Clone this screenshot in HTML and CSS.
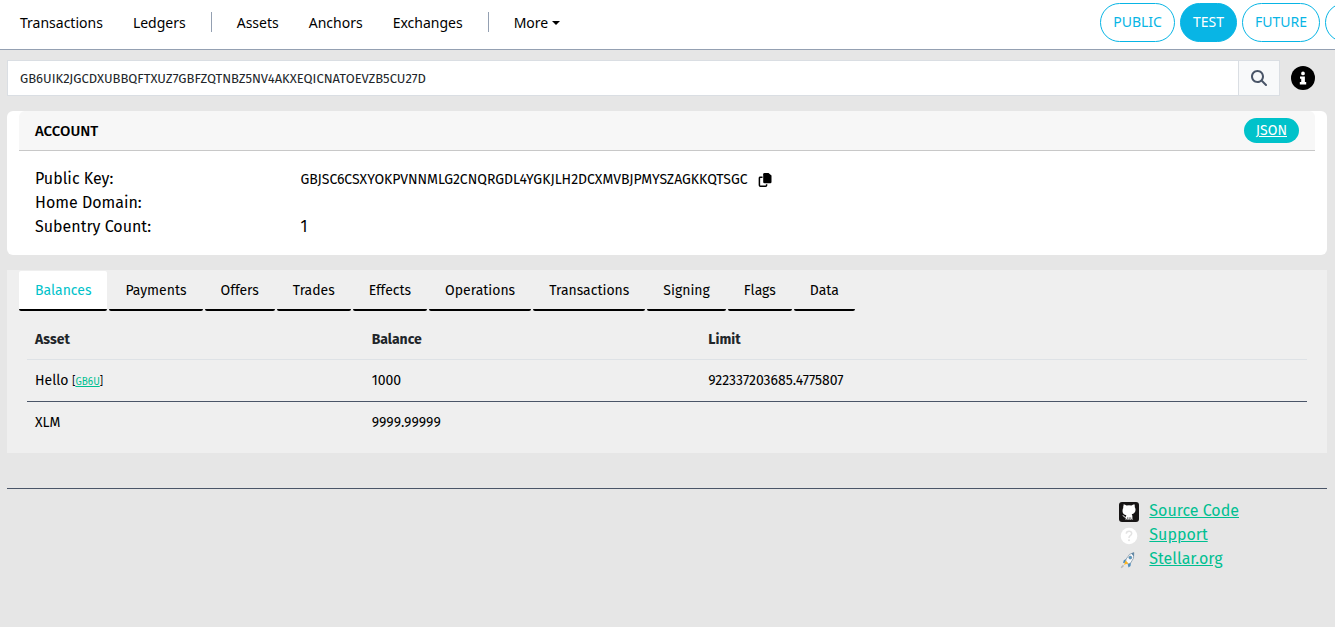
FILE: index.html
```html
<!DOCTYPE html>
<html lang="en">
<head>
<meta charset="utf-8">
<meta name="viewport" content="width=device-width, initial-scale=1">
<title>Account</title>
<link rel="stylesheet" href="styles.css">
</head>
<body>
<header class="topbar">
  <nav class="menu">
    <a href="#transactions">Transactions</a>
    <a href="#ledgers">Ledgers</a>
    <span class="divider"></span>
    <a href="#assets">Assets</a>
    <a href="#anchors">Anchors</a>
    <a href="#exchanges">Exchanges</a>
    <span class="divider"></span>
    <button class="more" type="button">More<span class="caret"></span></button>
  </nav>
  <div class="networks">
    <button class="pill" type="button">PUBLIC</button>
    <button class="pill pill-active" type="button">TEST</button>
    <button class="pill" type="button">FUTURE</button>
    <button class="pill pill-last" type="button"></button>
  </div>
</header>

<main class="page">
  <form class="search">
    <input class="search-input" type="text" aria-label="Search" value="GB6UIK2JGCDXUBBQFTXUZ7GBFZQTNBZ5NV4AKXEQICNATOEVZB5CU27D">
    <button class="search-button" type="button" aria-label="Search">
      <svg width="16" height="16" viewBox="0 0 512 512" fill="#4a5568"><path d="M416 208c0 45.900-14.900 88.300-40 122.700L502.600 457.400c12.500 12.500 12.500 32.800 0 45.300s-32.800 12.500-45.300 0L330.700 376c-34.400 25.200-76.800 40-122.700 40C93.100 416 0 322.900 0 208S93.100 0 208 0S416 93.100 416 208zM208 352a144 144 0 1 0 0-288 144 144 0 1 0 0 288z"/></svg>
    </button>
    <button class="info" type="button" aria-label="Information">
      <svg width="24" height="24" viewBox="0 0 512 512"><circle cx="256" cy="256" r="256"/><path fill="#fff" d="M256 118a40 40 0 1 1 0 80 40 40 0 1 1 0-80zM192 222h104v118h28v52H188v-52h30v-68h-26z"/></svg>
    </button>
  </form>

  <section class="card">
    <div class="card-head">
      <h1>ACCOUNT</h1>
      <a class="json" href="#json">JSON</a>
    </div>
    <dl class="details">
      <dt>Public Key:</dt>
      <dd class="key">GBJSC6CSXYOKPVNNMLG2CNQRGDL4YGKJLH2DCXMVBJPMYSZAGKKQTSGC
        <button class="copy" type="button" aria-label="Copy">
          <svg width="14" height="14" viewBox="0 0 14 14"><path d="M6.500 0h4L13.500 2.500V9q0 1.200-1.200 1.200H6.500Q5.200 10.200 5.200 9V1.200Q5.200 0 6.500 0z"/><path d="M4.500 4.300H2.200Q1.400 4.300 1.400 5v7.200q0 1 1 1h5.200q1 0 1-1V11.300" fill="none" stroke="#000" stroke-width="1.500"/></svg>
        </button>
      </dd>
      <dt>Home Domain:</dt>
      <dd></dd>
      <dt>Subentry Count:</dt>
      <dd>1</dd>
    </dl>
  </section>

  <section class="panel">
    <nav class="tabs">
      <a class="tab tab-active" href="#balances">Balances</a>
      <a class="tab" href="#payments">Payments</a>
      <a class="tab" href="#offers">Offers</a>
      <a class="tab" href="#trades">Trades</a>
      <a class="tab" href="#effects">Effects</a>
      <a class="tab" href="#operations">Operations</a>
      <a class="tab" href="#account-transactions">Transactions</a>
      <a class="tab" href="#signing">Signing</a>
      <a class="tab" href="#flags">Flags</a>
      <a class="tab" href="#data">Data</a>
    </nav>
    <div class="table-wrap">
      <table class="balances">
        <thead>
          <tr><th class="col-asset">Asset</th><th class="col-balance">Balance</th><th>Limit</th></tr>
        </thead>
        <tbody>
          <tr><td>Hello <small>[<a href="#issuer">GB6U</a>]</small></td><td>1000</td><td>922337203685.4775807</td></tr>
          <tr><td>XLM</td><td>9999.99999</td><td></td></tr>
        </tbody>
      </table>
    </div>
  </section>

  <footer class="footer">
    <ul class="links">
      <li>
        <svg width="20" height="20" viewBox="0 0 20 20"><rect width="20" height="20" rx="3" fill="#171515"/><path fill="#fff" d="M4.600 2.200Q6.200 2.500 7.500 3.400q2.500-.5 5 0 1.300-.9 2.900-1.200.6 1.500.3 2.900 1 1.200.8 3.200-.3 3.200-3.800 4 .7.800.7 2v2.500l.8.700h-1.700l-.4-1v-1.200h-.5v1.700l.4.800h-1.400l-.2-.6v-1.900h-.6v1.900l-.3.600H8.200l.3-.8v-1.700H8v1.300l-.4.900H6.100l.6-.8v-1q-1.600.1-2.200-1.100-.4-.8-1.200-1.200 1.300-.3 2.100.9.600.8 1.400.5.100-.9.600-1.500-3.700-.6-3.900-4-.1-2 .8-3.200-.3-1.400.3-2.900z"/></svg>
        <a href="#source">Source Code</a>
      </li>
      <li>
        <svg width="20" height="20" viewBox="0 0 20 20"><circle cx="10" cy="10" r="8.300" fill="#fff"/><path d="M7.300 7.800Q7.400 5.300 10 5.300t2.700 2.200q0 1.300-1.500 2.200Q10 10.500 10 12" fill="none" stroke="#e3e3e3" stroke-width="1.500"/><circle cx="10" cy="14.300" r="1" fill="#e3e3e3"/></svg>
        <a href="#support">Support</a>
      </li>
      <li>
        <svg width="20" height="20" viewBox="0 0 20 20"><path d="M8 8.500 4.800 10.300 4 13l4-.5zM12 12l-.5 4-2 1.500-.8-3.500z" fill="#4c8dbe"/><path d="M14.800 2.500Q10 3 7.200 9L6.600 11.500l2.700 2.300 2.300-.7Q15.800 8.500 14.800 2.500z" fill="#f8f9fb" stroke="#8499aa" stroke-width=".8"/><path d="M14.800 2.500 12.300 3.500l2.500 3z" fill="#567f9f"/><circle cx="11.300" cy="7.600" r="1.500" fill="#4d9ac8" stroke="#64788a" stroke-width=".5"/><path d="M6.800 10.500 5 14.800 9.300 13.600z" fill="#ffb51b"/><path d="m2.200 17.700 2.300-2.300" stroke="#b8b8b8" stroke-width="1.500"/></svg>
        <a href="#stellar">Stellar.org</a>
      </li>
    </ul>
  </footer>
</main>
</body>
</html>
```

FILE: styles.css
```css
* { box-sizing: border-box; }

body {
  margin: 0;
  background: #e6e6e6;
  color: #000;
  font: 16px/24px "Fira Sans", "Noto Sans", sans-serif;
}

button { font: inherit; cursor: pointer; }

.topbar {
  display: flex;
  justify-content: space-between;
  height: 50px;
  overflow: hidden;
  background: #fff;
  border-bottom: 1px solid #94a0b2;
  font: 14px/20px "Noto Sans", sans-serif;
}

.menu {
  display: flex;
  align-items: center;
  gap: 30px;
  height: 44px;
  padding-left: 20px;
}
.menu a { color: #000; text-decoration: none; line-height: 22px; }
.divider {
  width: 1px;
  height: 20px;
  margin: 0 -5px;
  background: #94a0b2;
}
.more {
  display: flex;
  align-items: center;
  gap: 4px;
  padding: 0;
  border: 0;
  background: none;
  line-height: 22px;
}
.menu a, .more { padding-top: 2px; }
.caret {
  border: 4px solid transparent;
  border-top-color: #000;
  border-bottom: 0;
}

.networks {
  display: flex;
  gap: 5px;
  padding-top: 3px;
  margin-right: -65px;
}
.pill {
  height: 39px;
  padding: 0 12px 2px;
  border: 1px solid #08b5e5;
  border-radius: 20px;
  background: #fff;
  color: #08b5e5;
}
.pill-active { background: #08b5e5; color: #fff; }
.pill-last { width: 75px; }

.page { padding: 10px 8px 0 7px; }

.search { display: flex; align-items: center; height: 36px; }
.search-input {
  flex: 1;
  min-width: 0;
  height: 36px;
  padding: 0 12px;
  border: 1px solid #dadee3;
  border-radius: 0;
  background: #fff;
  color: #212529;
  font: 13px/20px "Fira Sans", "Noto Sans", sans-serif;
}
.search-button {
  display: grid;
  place-items: center;
  width: 42px;
  height: 36px;
  margin-left: -1px;
  border: 1px solid #dadee3;
  background: #f8f9fa;
}
.info {
  display: flex;
  margin: 0 12px 0 11px;
  padding: 0;
  border: 0;
  background: none;
}

.card {
  margin-top: 15px;
  padding: 0 12px 16px;
  border-radius: 6px;
  background: #fff;
}
.card-head {
  display: flex;
  align-items: center;
  justify-content: space-between;
  height: 40px;
  padding: 0 16px;
  border-bottom: 1px solid #c8c8c8;
  border-radius: 6px 6px 0 0;
  background: #f7f7f7;
}
.card-head h1 {
  margin: 0;
  font-size: 15px;
  font-weight: 500;
}
.json {
  padding: 0 12px;
  border-radius: 13px;
  background: #00c2ca;
  color: #fff;
  font-size: 14px;
  line-height: 25px;
}
.details {
  display: grid;
  grid-template-columns: 21% 1fr;
  grid-auto-rows: 24px;
  margin: 0;
  padding: 16px 16px 0;
}
.details dd { margin: 0; }
.details .key {
  display: flex;
  align-items: center;
  gap: 10px;
  padding-top: 2px;
  font-size: 14px;
}
.copy { display: flex; padding: 0; border: 0; background: none; }

.panel {
  margin-top: 15px;
  padding: 1px 12px 10px;
  background: #efefef;
}
.tabs { display: flex; gap: 2px; }
.tab {
  height: 40px;
  padding: 0 16px;
  border-bottom: 2px solid #000;
  border-radius: 2px;
  color: #000;
  font-size: 14px;
  line-height: 40px;
  text-decoration: none;
}
.tab-active { background: #fff; color: #00c2ca; }

.table-wrap { padding: 8px 8px 0; }
.balances {
  width: 100%;
  table-layout: fixed;
  border-collapse: collapse;
  font-size: 14px;
  line-height: 20px;
}
.balances th, .balances td { height: 42px; padding: 2px 8px 0; text-align: left; }
.balances th { height: 40px; padding-top: 3px; border-bottom: 1px solid #dee2e6; color: #212529; }
.balances tbody tr + tr { border-top: 1px solid #4a5568; }
.balances small { font-size: 10px; }
.col-asset, .col-balance { width: 26.300%; }

.footer {
  display: flex;
  justify-content: flex-end;
  margin-top: 35px;
  padding: 10px 88px 0 0;
  border-top: 1px solid #4a5568;
}
.links { margin: 0; padding: 0; list-style: none; }
.links li { display: flex; gap: 10px; align-items: flex-end; }
.links svg { margin-bottom: 1px; }
a { color: #00bf91; }
```
